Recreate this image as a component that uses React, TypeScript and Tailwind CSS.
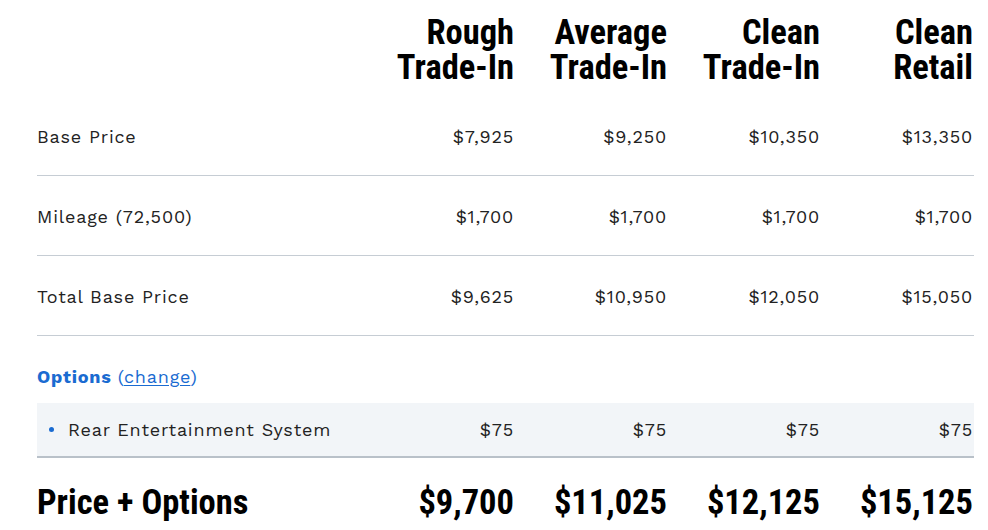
import React from "react";

type Row = {
  label: string;
  values: string[];
};

const columns = [
  ["Rough", "Trade-In"],
  ["Average", "Trade-In"],
  ["Clean", "Trade-In"],
  ["Clean", "Retail"],
];

const rows: Row[] = [
  { label: "Base Price", values: ["$7,925", "$9,250", "$10,350", "$13,350"] },
  { label: "Mileage (72,500)", values: ["$1,700", "$1,700", "$1,700", "$1,700"] },
  { label: "Total Base Price", values: ["$9,625", "$10,950", "$12,050", "$15,050"] },
];

const totals = ["$9,700", "$11,025", "$12,125", "$15,125"];

const heading = "font-['Roboto_Condensed','Roboto','DejaVu_Sans_Condensed',sans-serif] font-bold [font-stretch:75%] text-black";
const body = "font-['Work_Sans','Inter','Liberation_Sans',sans-serif] text-[18px] tracking-[0.8px] text-[#222]";
const grid = "grid grid-cols-[324px_repeat(4,153px)]";

const App = () => {
  return (
    <div className="w-[988px] h-[530px] overflow-hidden bg-white pl-[37px]">
      <div className="w-[937px]">
        <div className={`${grid} pt-[15px] h-[96px]`}>
          <div />
          {columns.map((c, i) => (
            <div key={i} className={`${heading} text-right text-[34.5px] leading-[35px]`}>
              {c[0]}
              <br />
              {c[1]}
            </div>
          ))}
        </div>

        {rows.map((r) => (
          <div key={r.label} className={`${grid} ${body} h-[80px] items-center border-b border-[#c6cdd4] pt-[2px]`}>
            <div>{r.label}</div>
            {r.values.map((v, i) => (
              <div key={i} className="text-right">
                {v}
              </div>
            ))}
          </div>
        ))}

        <div className={`${body} h-[67px] flex items-center pt-[14px]`}>
          <span className="font-bold text-[#1a6bd1]">Options</span>
          <span className="ml-[6px] text-[#1a6bd1]">
            (<a href="#" className="underline underline-offset-2">change</a>)
          </span>
        </div>

        <div className={`${grid} ${body} h-[55px] items-center bg-[#f2f5f8] border-b-2 border-[#b9c1c9]`}>
          <div className="flex items-center pl-[12px]">
            <span className="w-[5px] h-[5px] rounded-full bg-[#1a6bd1] mr-[14px]" />
            <span>Rear Entertainment System</span>
          </div>
          {["$75", "$75", "$75", "$75"].map((v, i) => (
            <div key={i} className="text-right">
              {v}
            </div>
          ))}
        </div>

        <div className={`${grid} ${heading} h-[86px] items-center text-[34.5px] pt-[3px]`}>
          <div>Price + Options</div>
          {totals.map((v, i) => (
            <div key={i} className="text-right">
              {v}
            </div>
          ))}
        </div>
      </div>
    </div>
  );
};

export default App;
